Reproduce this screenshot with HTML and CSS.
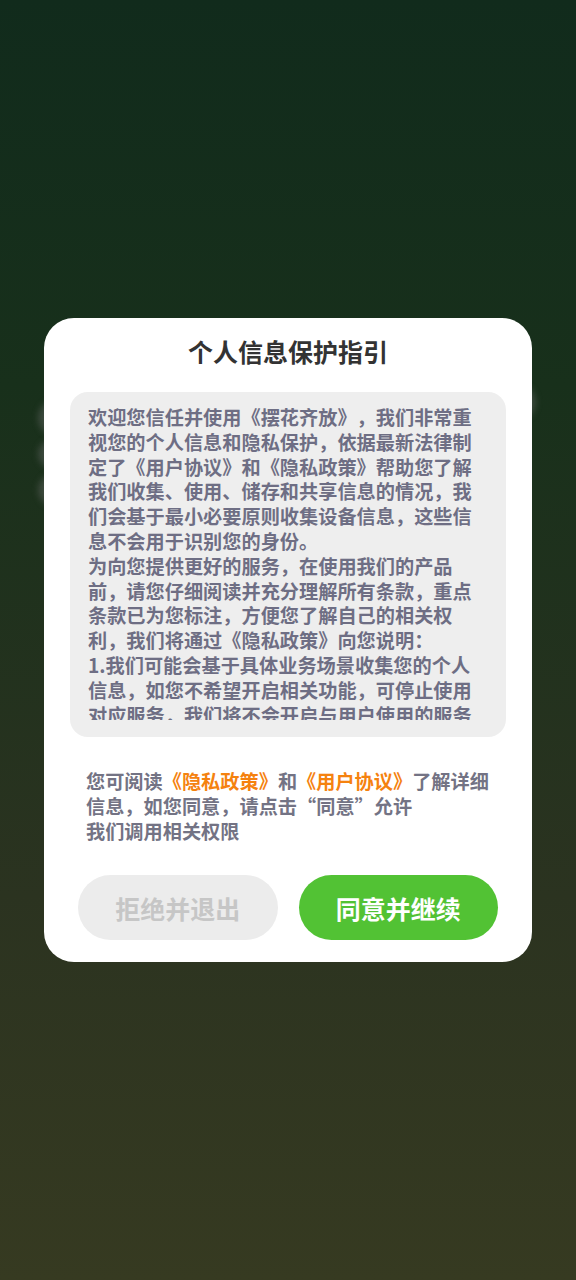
FILE: index.html
```html
<!DOCTYPE html>
<html lang="zh-CN">
<head>
<meta charset="utf-8">
<link rel="stylesheet" href="styles.css">
</head>
<body>
<div class="screen">
  <div class="ghosts">
    <span class="ghost g1"></span>
    <span class="ghost g2"></span>
    <span class="ghost g3"></span>
    <span class="ghost g4"></span>
  </div>
  <div class="dialog">
    <h1 class="title">个人信息保护指引</h1>
    <div class="terms">
      <div class="terms-scroll">
        <p>欢迎您信任并使用《摆花齐放》，我们非常重视您的个人信息和隐私保护，依据最新法律制定了《用户协议》和《隐私政策》帮助您了解我们收集、使用、储存和共享信息的情况，我们会基于最小必要原则收集设备信息，这些信息不会用于识别您的身份。</p>
        <p>为向您提供更好的服务，在使用我们的产品前，请您仔细阅读并充分理解所有条款，重点条款已为您标注，方便您了解自己的相关权利，我们将通过《隐私政策》向您说明：</p>
        <p>1.我们可能会基于具体业务场景收集您的个人信息，如您不希望开启相关功能，可停止使用对应服务，我们将不会开启与用户使用的服务无关的功能。</p>
      </div>
    </div>
    <p class="notice">您可阅读<span class="link">《隐私政策》</span>和<span class="link">《用户协议》</span>了解详细信息，如您同意，请点击“同意”允许<br>我们调用相关权限</p>
    <div class="actions">
      <button class="btn btn-reject">拒绝并退出</button>
      <button class="btn btn-agree">同意并继续</button>
    </div>
  </div>
</div>
</body>
</html>
```

FILE: styles.css
```css
* { box-sizing: border-box; }
html, body { margin: 0; padding: 0; }
body {
  width: 576px;
  height: 1280px;
  overflow: hidden;
  font-family: "Noto Sans CJK SC", "Noto Sans", sans-serif;
  text-spacing-trim: space-all;
}
.screen {
  position: relative;
  width: 576px;
  height: 1280px;
  background: linear-gradient(180deg, #112b1c 0%, #18301b 30%, #2b3320 70%, #363a21 100%);
  padding-top: 318px;
  display: flex;
  flex-direction: column;
  align-items: center;
}
.ghosts { position: absolute; inset: 0; pointer-events: none; }
.ghost {
  position: absolute;
  background: rgba(110, 110, 110, 0.4);
  border-radius: 24px;
  filter: blur(3px);
}
.g1 { left: 38px; top: 400px; width: 40px; height: 36px; }
.g2 { left: 38px; top: 440px; width: 40px; height: 28px; }
.g3 { left: 38px; top: 474px; width: 40px; height: 32px; }
.g4 { left: 498px; top: 384px; width: 38px; height: 36px; }
.dialog {
  position: relative;
  width: 488px;
  background: #ffffff;
  border-radius: 30px;
  padding: 16px 26px 22px;
  display: flex;
  flex-direction: column;
}
.title {
  margin: 0;
  text-align: center;
  font-size: 25px;
  line-height: 34px;
  font-weight: 700;
  color: #333333;
}
.terms {
  margin-top: 24px;
  height: 345px;
  background: #eeeeee;
  border-radius: 18px;
  padding: 13px 18px 17px;
  color: #6e6e84;
  font-size: 19.2px;
  line-height: 24.8px;
  font-weight: 700;
  display: flex;
  flex-direction: column;
}
.terms-scroll {
  flex: 1;
  overflow: hidden;
}
.terms p { margin: 0; }
.notice {
  margin: 32px 0 0;
  padding: 0 14px 0 16px;
  color: #737384;
  font-size: 19.2px;
  line-height: 25px;
  font-weight: 700;
}
.link { color: #f5820f; }
.actions {
  margin-top: 31px;
  display: flex;
  gap: 21px;
  padding: 0 8px;
}
.btn {
  flex: 1;
  height: 65px;
  border: none;
  border-radius: 33px;
  font-family: inherit;
  font-size: 25px;
  font-weight: 700;
}
.btn-reject { background: #ececec; color: #c6c6c6; }
.btn-agree { background: #52c234; color: #ffffff; }
```
